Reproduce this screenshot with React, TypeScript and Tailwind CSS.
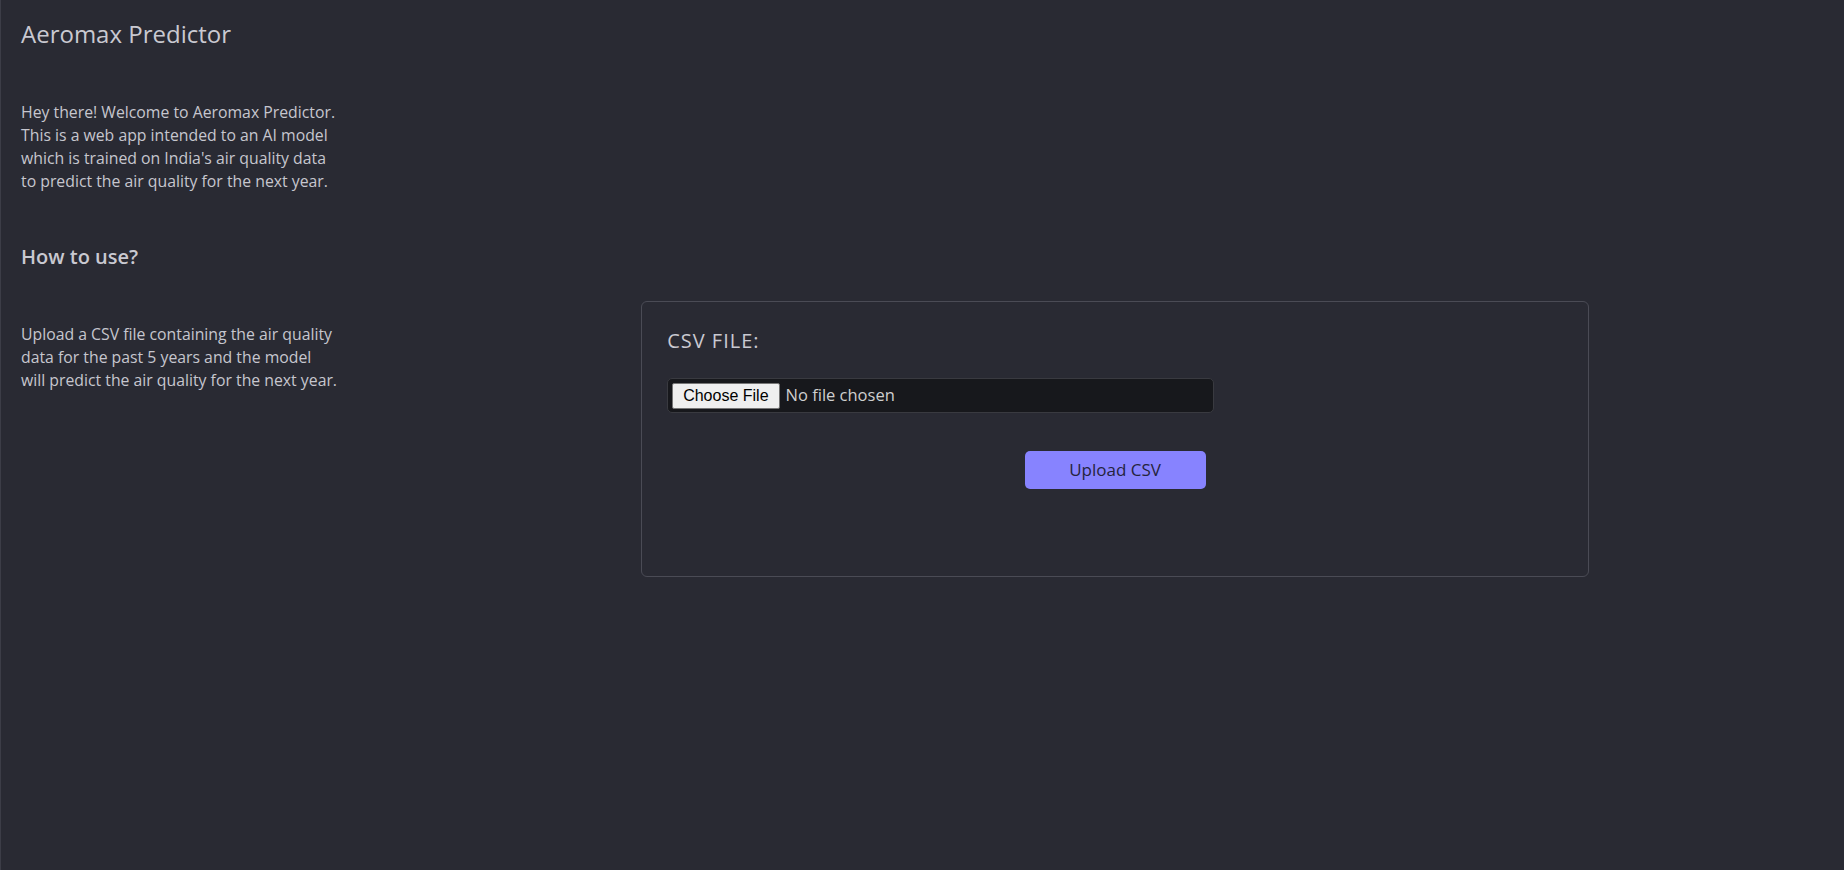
import { useRef, useState } from "react";

export default function App() {
  const [file, setFile] = useState<File | null>(null);
  const inputRef = useRef<HTMLInputElement>(null);

  const upload = () => {
    if (!file) return;
    // TODO: send to the model
  };

  return (
    <div className="flex min-h-screen w-full bg-[#292a33] border-l border-[#3c3d47] text-[#c6c6ce] font-['Open_Sans',Lato,sans-serif]">
      {/* Sidebar */}
      <aside className="w-[385px] shrink-0 pl-5 pt-[18px]">
        <h1 className="text-[24px] leading-[32px] font-medium text-[#c9c9d1]">
          Aeromax Predictor
        </h1>
        <p className="mt-[51px] text-[15.8px] leading-[23px]">
          Hey there! Welcome to Aeromax Predictor.
          <br />
          This is a web app intended to an AI model
          <br />
          which is trained on India's air quality data
          <br />
          to predict the air quality for the next year.
        </p>

        <h2 className="mt-[50px] text-[20px] leading-[28px] font-semibold text-[#c9c9d1]">
          How to use?
        </h2>
        <p className="mt-[52px] text-[15.8px] leading-[23px]">
          Upload a CSV file containing the air quality
          <br />
          data for the past 5 years and the model
          <br />
          will predict the air quality for the next year.
        </p>
      </aside>

      {/* Main */}
      <main className="flex flex-1 items-center justify-center pt-2">
        <div className="w-[65%] h-[276px] rounded-[6px] border border-[#4a4b55] px-[25px] pt-[25px]">
          <label className="block text-[20px] leading-[28px] font-medium tracking-[0.05em] uppercase text-[#c9c9d1]">
            CSV File:
          </label>
          <input
            ref={inputRef}
            type="file"
            accept=".csv"
            onChange={(e) => setFile(e.target.files?.[0] ?? null)}
            className="mt-[23px] block w-[547px] h-[35px] px-[4px] py-[3px] rounded-[5px] border border-[#393a40] bg-[#17181c]
              text-[16.5px] leading-[26px] text-[#cfcfcf]
              file:h-[26px] file:px-[10px] file:mr-[6px] file:border file:border-[#767676] file:rounded-[2px]
              file:bg-[#efefef] file:text-black file:text-base file:font-['Liberation_Sans',Arial,sans-serif]"
          />
          <button
            onClick={upload}
            className="mt-[38px] mx-auto block w-[181px] h-[38px] rounded-[5px] bg-[#8783ff] text-[17px] text-[#25233d]"
          >
            Upload CSV
          </button>
        </div>
      </main>
    </div>
  );
}
